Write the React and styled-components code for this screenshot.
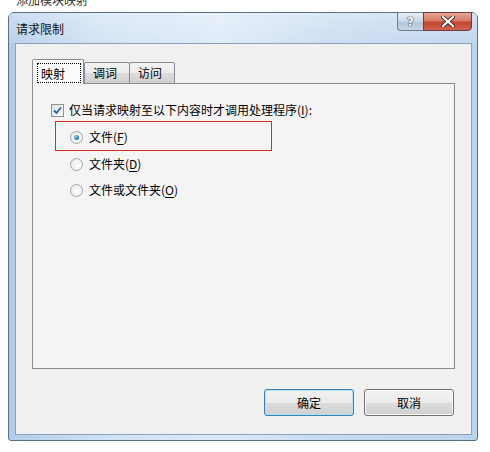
import styled, { createGlobalStyle } from "styled-components";

const GlobalStyle = createGlobalStyle`
  html, body {
    margin: 0;
    padding: 0;
    background: #ffffff;
  }
  body {
    font-family: "Noto Sans CJK SC", "Liberation Sans", sans-serif;
    font-size: 12px;
    color: #000000;
  }
`;

export default function App() {
  return (
    <Page>
      <GlobalStyle />
      <BackStrip>
        <BackTitle>添加模块映射</BackTitle>
      </BackStrip>
      <Window>
        <TitleBar>
          <Title>请求限制</Title>
          <Caption>
            <HelpButton>?</HelpButton>
            <CloseButton>
              <svg width="14" height="11" viewBox="0 0 14 11">
                <path
                  d="M2 1 L12 10 M12 1 L2 10"
                  stroke="#4a2a2a"
                  strokeWidth="4"
                  strokeLinecap="round"
                />
                <path
                  d="M2 1 L12 10 M12 1 L2 10"
                  stroke="#ffffff"
                  strokeWidth="2.2"
                  strokeLinecap="round"
                />
              </svg>
            </CloseButton>
          </Caption>
        </TitleBar>
        <Client>
          <TabStrip>
            <Tab active>
              <Focus>映射</Focus>
            </Tab>
            <Tab>
              <TabText>调词</TabText>
            </Tab>
            <Tab>
              <TabText>访问</TabText>
            </Tab>
          </TabStrip>
          <Panel>
            <Row>
              <CheckBox>
                <svg width="9" height="9" viewBox="0 0 9 9">
                  <path
                    d="M1 4.5 L3.5 7 L8 1.5"
                    stroke="#2c5c9c"
                    strokeWidth="1.8"
                    fill="none"
                  />
                </svg>
              </CheckBox>
              <Label>
                仅当请求映射至以下内容时才调用处理程序(<u>I</u>):
              </Label>
            </Row>
            <Options>
              <Highlight>
                <Row tall={24}>
                  <Radio checked />
                  <Label>
                    文件(<u>F</u>)
                  </Label>
                </Row>
              </Highlight>
              <Row tall={26}>
                <Radio />
                <Label>
                  文件夹(<u>D</u>)
                </Label>
              </Row>
              <Row tall={26}>
                <Radio />
                <Label>
                  文件或文件夹(<u>O</u>)
                </Label>
              </Row>
            </Options>
          </Panel>
          <ButtonRow>
            <Button primary>确定</Button>
            <Button>取消</Button>
          </ButtonRow>
        </Client>
      </Window>
    </Page>
  );
}

const Page = styled.div`
  width: 490px;
  height: 452px;
  overflow: hidden;
  background: #ffffff;
`;

const BackStrip = styled.div`
  height: 12px;
  margin-left: 8px;
  width: 90px;
  overflow: hidden;
  border-top-left-radius: 6px;
`;

const BackTitle = styled.div`
  margin-top: -8px;
  padding-left: 8px;
  font-size: 12px;
  line-height: 16px;
  color: #333333;
  white-space: nowrap;
`;

const Window = styled.div`
  margin-left: 8px;
  width: 470px;
  height: 429px;
  box-sizing: border-box;
  border: 1px solid #5b6f88;
  border-radius: 6px 6px 3px 3px;
  background: linear-gradient(
    90deg,
    #b2cce9 0%,
    #cfe1f4 20%,
    #dce9f7 45%,
    #c6daf0 70%,
    #bcd3ec 100%
  );
  display: flex;
  flex-direction: column;
`;

const TitleBar = styled.div`
  height: 30px;
  display: flex;
  align-items: flex-start;
  justify-content: space-between;
  padding-left: 7px;
  background: linear-gradient(
    180deg,
    rgba(255, 255, 255, 0.35) 0%,
    rgba(255, 255, 255, 0.1) 100%
  );
`;

const Title = styled.div`
  font-size: 12px;
  line-height: 14px;
  margin-top: 9px;
  color: #111111;
`;

const Caption = styled.div`
  display: flex;
  margin-right: 5px;
  margin-top: -1px;
`;

const HelpButton = styled.div`
  width: 26px;
  height: 19px;
  box-sizing: border-box;
  border: 1px solid #6b7f99;
  border-right: none;
  border-radius: 0 0 0 4px;
  background: linear-gradient(180deg, #e6edf5 0%, #c9d6e6 50%, #b5c5d9 51%, #c6d5e6 100%);
  display: flex;
  align-items: center;
  justify-content: center;
  font-family: "DejaVu Sans", sans-serif;
  font-size: 12px;
  font-weight: bold;
  color: #ffffff;
  text-shadow: 0 0 1px #2d3e55, 0 0 1px #2d3e55, 0 0 1px #2d3e55;
`;

const CloseButton = styled.div`
  width: 49px;
  height: 19px;
  box-sizing: border-box;
  border: 1px solid #6e3c3c;
  border-radius: 0 0 4px 0;
  background: linear-gradient(180deg, #e8a596 0%, #d67a68 45%, #c0452f 55%, #d06550 100%);
  display: flex;
  align-items: center;
  justify-content: center;
`;

const Client = styled.div`
  flex: 1;
  margin: 0 5px 5px 6px;
  border: 1px solid #8ba2bf;
  background: #f0f0f0;
  padding: 16px 16px 0 16px;
  display: flex;
  flex-direction: column;
`;

const TabStrip = styled.div`
  display: flex;
  align-items: flex-end;
  height: 24px;
  position: relative;
  z-index: 1;
  margin-bottom: -1px;
`;

const Tab = styled.div`
  box-sizing: border-box;
  height: ${(p) => (p.active ? "25px" : "22px")};
  padding: ${(p) => (p.active ? "3px 2px 0 4px" : "0 12px 0 8px")};
  margin-right: ${(p) => (p.active ? "0" : "-1px")};
  border: 1px solid #898c95;
  border-bottom: ${(p) => (p.active ? "none" : "1px solid #898c95")};
  border-radius: 2px 2px 0 0;
  background: ${(p) =>
    p.active
      ? "#fbfbfb"
      : "linear-gradient(180deg, #f3f3f3 0%, #ebebeb 50%, #dddddd 51%, #cfcfcf 100%)"};
  display: flex;
  align-items: ${(p) => (p.active ? "flex-start" : "center")};
  font-size: 12px;
  position: relative;
  z-index: ${(p) => (p.active ? 2 : 1)};
`;

const Focus = styled.div`
  width: 44px;
  height: 20px;
  box-sizing: border-box;
  border: 1px dotted #000000;
  padding-left: 3px;
  display: flex;
  align-items: center;
`;

const TabText = styled.span`
  line-height: 20px;
`;

const Panel = styled.div`
  width: 423px;
  height: 286px;
  box-sizing: border-box;
  border: 1px solid #898c95;
  background: #f4f4f4;
  padding: 15px 0 0 18px;
  display: flex;
  flex-direction: column;
`;

const Row = styled.div`
  height: ${(p) => p.tall || 22}px;
  flex-shrink: 0;
  display: flex;
  align-items: center;
  gap: 6px;
`;

const Label = styled.span`
  font-size: 12px;
  line-height: 14px;
  color: #000000;

  u {
    text-decoration: underline;
    text-underline-offset: 2px;
  }
`;

const CheckBox = styled.div`
  width: 13px;
  height: 13px;
  box-sizing: border-box;
  border: 1px solid #8e8f8f;
  background: linear-gradient(135deg, #e0e0e0 0%, #fbfbfb 100%);
  display: flex;
  align-items: center;
  justify-content: center;
  margin-right: -1px;
`;

const Options = styled.div`
  display: flex;
  flex-direction: column;
  margin-left: 19px;
`;

const Highlight = styled.div`
  width: 217px;
  height: 30px;
  box-sizing: border-box;
  margin-left: -15px;
  padding: 3px 0 0 14px;
  border: 1px solid #d42a2a;
`;

const Radio = styled.div`
  width: 13px;
  height: 13px;
  box-sizing: border-box;
  border-radius: 50%;
  border: 1px solid #a4a4a4;
  background: radial-gradient(circle at 60% 60%, #ffffff 0%, #e4e4e4 100%);
  display: flex;
  align-items: center;
  justify-content: center;

  &::after {
    content: "";
    display: ${(p) => (p.checked ? "block" : "none")};
    width: 5px;
    height: 5px;
    border-radius: 50%;
    background: radial-gradient(circle at 35% 35%, #8fd0f5 0%, #1c6fb6 70%, #144e85 100%);
  }
`;

const ButtonRow = styled.div`
  display: flex;
  justify-content: flex-end;
  gap: 10px;
  margin-top: 20px;
  width: 423px;
  padding-right: 1px;
  box-sizing: border-box;
`;

const Button = styled.div`
  width: 90px;
  height: 27px;
  box-sizing: border-box;
  border: 1px solid ${(p) => (p.primary ? "#3c7fb1" : "#707070")};
  border-radius: 3px;
  background: linear-gradient(180deg, #f2f2f2 0%, #ebebeb 50%, #dddddd 51%, #cfcfcf 100%);
  box-shadow: ${(p) =>
    p.primary ? "inset 0 0 0 1px #aee3f8" : "inset 0 0 0 1px #fbfbfb"};
  display: flex;
  align-items: center;
  justify-content: center;
  font-size: 12px;
  color: #000000;
`;
